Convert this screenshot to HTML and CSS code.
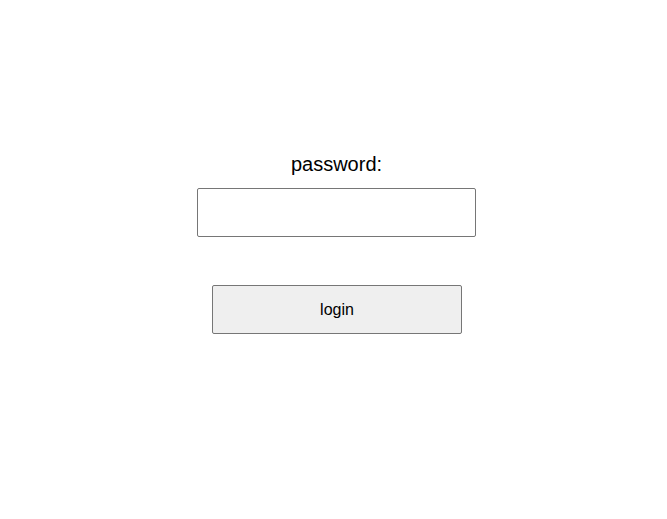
FILE: index.html
```html
<!DOCTYPE html>
<html>
<head>
<meta charset="utf-8">
<link rel="stylesheet" href="styles.css">
</head>
<body>
<main class="login">
  <label class="label" for="pw">password:</label>
  <input class="field" id="pw" type="password">
  <button class="btn" type="button">login</button>
</main>
</body>
</html>
```
FILE: styles.css
```css
html, body {
  margin: 0;
  padding: 0;
  background: #fff;
}
.login {
  display: flex;
  flex-direction: column;
  align-items: center;
  padding-top: 153px;
  padding-left: 6px;
  font-family: "Liberation Sans", Arial, sans-serif;
}
.label {
  font-size: 20px;
  line-height: 23px;
  color: #000;
}
.field {
  box-sizing: border-box;
  width: 279px;
  height: 49px;
  margin-top: 12px;
  border: 1px solid #767676;
  border-radius: 2px;
  background: #fff;
  padding: 0 8px;
  font-size: 16px;
}
.btn {
  box-sizing: border-box;
  width: 250px;
  height: 49px;
  margin-top: 48px;
  margin-left: 1px;
  border: 1px solid #767676;
  border-radius: 2px;
  background: #efefef;
  color: #000;
  font-family: "Liberation Sans", Arial, sans-serif;
  font-size: 16px;
}
```
